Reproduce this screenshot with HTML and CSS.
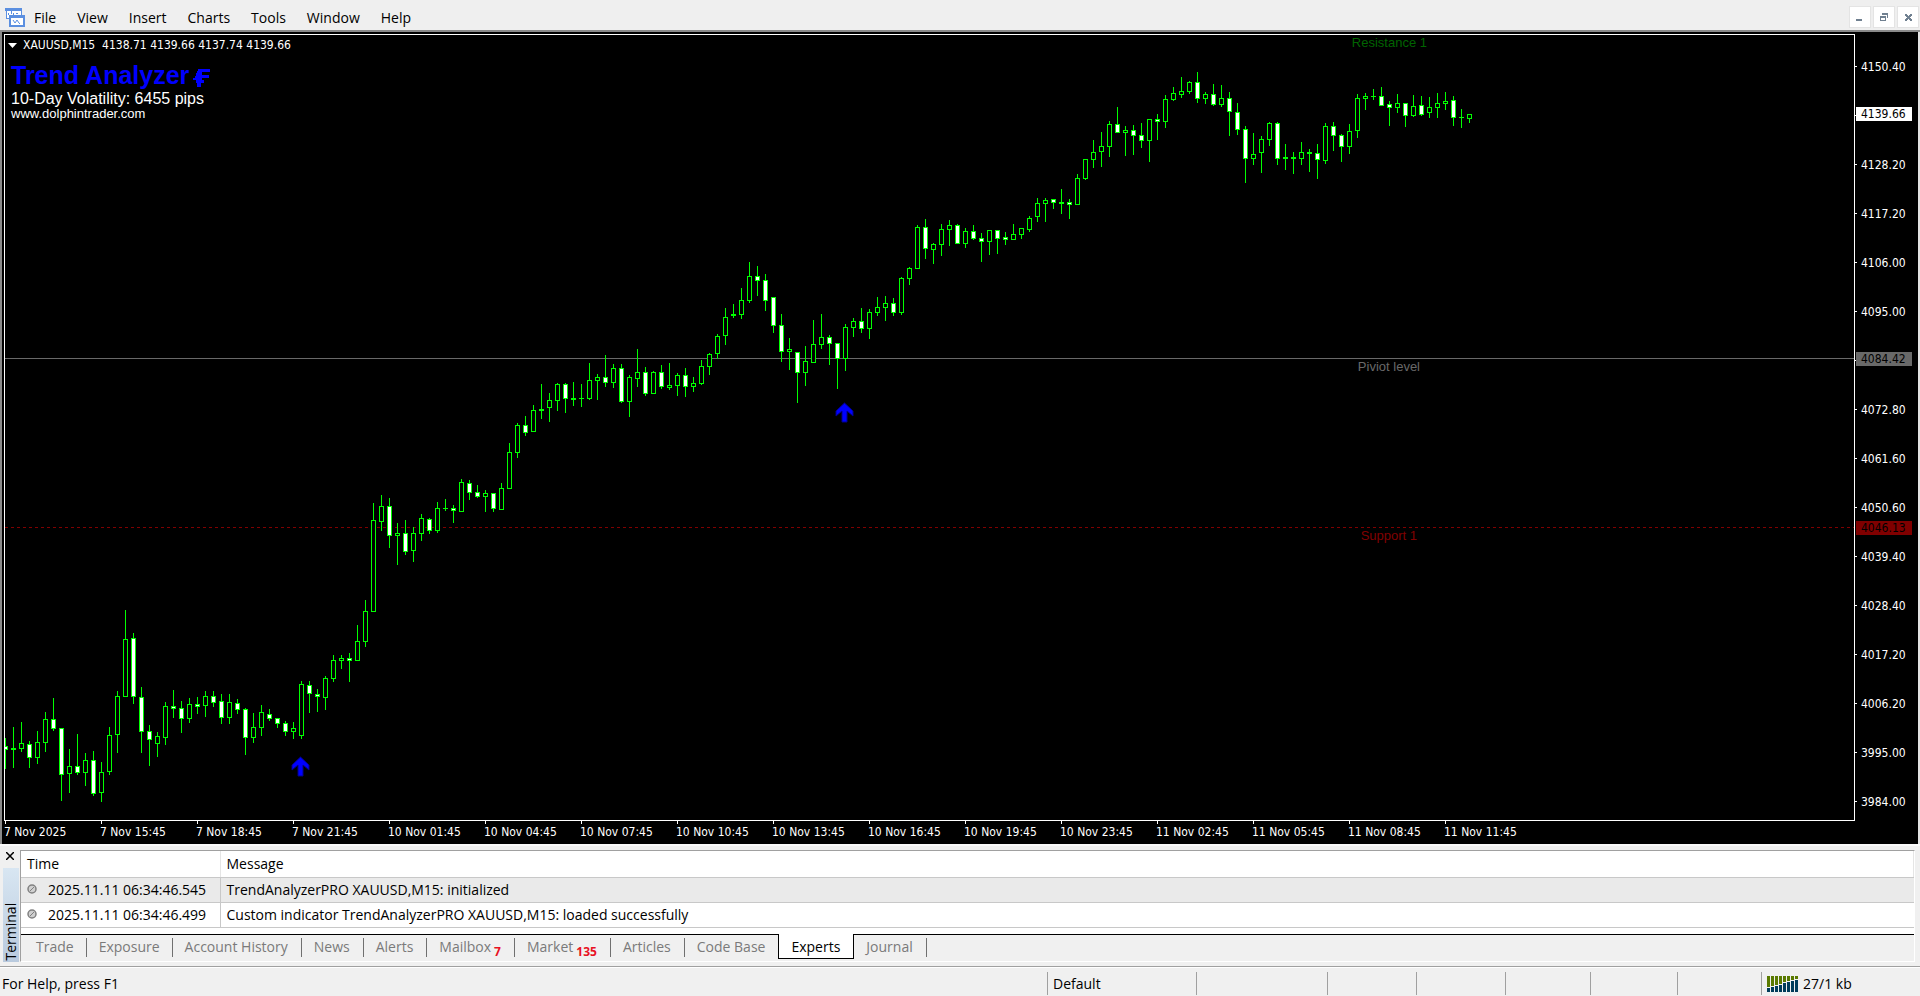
FILE: index.html
```html
<!DOCTYPE html>
<html lang="en">
<head>
<meta charset="utf-8">
<title>XAUUSD,M15</title>
<link rel="stylesheet" href="styles.css">
</head>
<body>
<header class="menubar">
  <svg class="logo" width="20" height="20" viewBox="0 0 20 20" fill="none" stroke="#5b8fe0" shape-rendering="crispEdges">
    <rect x="1" y="1" width="15" height="10" fill="#fff" stroke-width="1"/>
    <path d="M0 1.5H17M0 2.5H17" stroke-width="2"/>
    <path d="M3 8V6M6 7V4M8 8V6M11 6h2" stroke-width="1"/>
    <rect x="5" y="9" width="14" height="10" fill="#fff" stroke-width="2"/>
    <path d="M4 9.5H20" stroke-width="3"/>
    <path d="M8 13l2 3 2-3 2 3 1 1" stroke-width="1" shape-rendering="auto"/>
  </svg>
  <nav class="menu">
    <button>File</button><button>View</button><button>Insert</button><button>Charts</button><button>Tools</button><button>Window</button><button>Help</button>
  </nav>
  <div class="winbtns">
    <button aria-label="Minimize"><svg width="20" height="20" fill="#708090" shape-rendering="crispEdges"><path d="M6 12h6v2H6z"/></svg></button>
    <button aria-label="Restore"><svg width="20" height="20" fill="#708090" fill-rule="evenodd" shape-rendering="crispEdges"><path d="M8 6h6v5h-1V8H8zM6 9h6v5H6zM7 11v2h4v-2z"/></svg></button>
    <button aria-label="Close"><svg width="20" height="20" fill="#708090" shape-rendering="crispEdges"><path d="M7 7h2v1h1v1h1V8h1V7h2v2h-1v1h-1v1h1v1h1v2h-2v-1h-1v-1h-1v1H9v1H7v-2h1v-1h1v-1H8V9H7z"/></svg></button>
  </div>
</header>

<main class="chart">
  <section class="plot" aria-label="XAUUSD M15 chart">
    <svg class="canvas" shape-rendering="crispEdges">
      <rect x="0" y="323" width="100%" height="1" fill="#696969"/>
      <line x1="0" y1="492.5" x2="100%" y2="492.5" stroke="#800000" stroke-dasharray="3 3"/>
      <path id="candles" fill="#00ff00"/>
      <path id="hollow" fill="#000"/>
      <path id="solid" fill="#fff"/>
      <g fill="#0000ff" stroke="#00008b" stroke-width="1" shape-rendering="auto">
        <path d="M295.500 722l8.500 8v5l-6-5v11h-5v-11l-6 5v-5z"/>
        <path d="M839.500 368l8.500 8v5l-6-5v11h-5v-11l-6 5v-5z"/>
      </g>
    </svg>
    <div class="info">
      <p class="quote"><svg width="10" height="5" fill="#fff"><path d="M0 0h9L4.500 5z"/></svg><span>XAUUSD,M15&nbsp; 4138.71 4139.66 4137.74 4139.66</span></p>
      <h1 class="title"><span>Trend Analyzer</span><svg width="17" height="18" fill="#00f" shape-rendering="crispEdges"><path d="M5 0h12v3H9v3h7v3H9v2h2v3H8v4H4v-4H3v-3H0V9h2V7h1V4h1V2h1z"/></svg></h1>
      <p class="vol">10-Day Volatility: 6455 pips</p>
      <p class="site">www.dolphintrader.com</p>
    </div>
    <span class="level resistance">Resistance 1</span>
    <span class="level pivot">Piviot level</span>
    <span class="level support">Support 1</span>
  </section>
  <div class="prices">
    <span>4150.40</span><span class="off"></span><span>4128.20</span><span>4117.20</span><span>4106.00</span><span>4095.00</span><span class="off"></span><span>4072.80</span><span>4061.60</span><span>4050.60</span><span>4039.40</span><span>4028.40</span><span>4017.20</span><span>4006.20</span><span>3995.00</span><span>3984.00</span>
    <b class="tag now">4139.66</b><b class="tag mid">4084.42</b><b class="tag low">4046.13</b>
  </div>
  <div class="times">
    <span>7 Nov 2025</span><span>7 Nov 15:45</span><span>7 Nov 18:45</span><span>7 Nov 21:45</span><span>10 Nov 01:45</span><span>10 Nov 04:45</span><span>10 Nov 07:45</span><span>10 Nov 10:45</span><span>10 Nov 13:45</span><span>10 Nov 16:45</span><span>10 Nov 19:45</span><span>10 Nov 23:45</span><span>11 Nov 02:45</span><span>11 Nov 05:45</span><span>11 Nov 08:45</span><span>11 Nov 11:45</span>
  </div>
</main>

<section class="terminal">
  <div class="side">
    <button class="close" aria-label="Close terminal"><svg width="8" height="8" stroke="#000" stroke-width="1.500"><path d="M0 0l8 8M8 0L0 8"/></svg></button>
    <div class="grip"><span>Terminal</span></div>
  </div>
  <div class="panel">
    <table class="log">
      <thead><tr><th class="time">Time</th><th>Message</th></tr></thead>
      <tbody>
        <tr class="alt"><td><svg class="dot" width="10" height="10"><circle cx="5" cy="5" r="4" fill="#d0d0d0" stroke="#808080" stroke-width="1.500"/><path d="M3 7l4-4" stroke="#808080"/></svg>2025.11.11 06:34:46.545</td><td>TrendAnalyzerPRO XAUUSD,M15: initialized</td></tr>
        <tr><td><svg class="dot" width="10" height="10"><circle cx="5" cy="5" r="4" fill="#d0d0d0" stroke="#808080" stroke-width="1.500"/><path d="M3 7l4-4" stroke="#808080"/></svg>2025.11.11 06:34:46.499</td><td>Custom indicator TrendAnalyzerPRO XAUUSD,M15: loaded successfully</td></tr>
      </tbody>
    </table>
    <nav class="tabs">
      <button>Trade</button><button>Exposure</button><button>Account History</button><button>News</button><button>Alerts</button><button>Mailbox<b>7</b></button><button>Market<b>135</b></button><button>Articles</button><button class="last">Code Base</button><button class="active">Experts</button><button>Journal</button>
    </nav>
  </div>
</section>

<footer class="status">
  <span>For Help, press F1</span><span>Default</span><span></span><span></span><span></span><span></span><span></span><span></span>
  <span class="net"><svg width="32" height="16" shape-rendering="crispEdges">
    <path fill="#5a7a00" d="M0 0h3v11H0zM4 0h3v10H4zM8 0h3v9H8zM12 0h3v8h-3zM16 0h3v6h-3zM20 0h3v5h-3zM24 0h3v4h-3zM28 0h3v3h-3z"/>
    <path fill="#003c5a" d="M0 12h3v4H0zM4 11h3v5H4zM8 10h3v6H8zM12 9h3v7h-3zM16 7h3v9h-3zM20 6h3v10h-3zM24 5h3v11h-3zM28 4h3v12h-3z"/>
  </svg>27/1 kb</span>
</footer>
<script src="chart.js"></script>
</body>
</html>
```
FILE: styles.css
```css
* { box-sizing: border-box; }
body {
  margin: 0;
  min-height: 100vh;
  display: flex;
  flex-direction: column;
  background: #f0f0f0;
  color: #000;
  font: 14px/20px "Open Sans", "Noto Sans", sans-serif;
}
button {
  font: inherit;
  color: inherit;
  background: none;
  border: 0;
  padding: 0;
}
p, h1 { margin: 0; }
svg { display: block; flex: none; }

.menubar {
  display: flex;
  align-items: center;
  height: 32px;
  padding: 5px 1px 1px 5px;
  background: #efefef;
  border-bottom: 2px solid #8a8a8a;
}
.menu {
  display: flex;
  gap: 21px;
  margin-left: 9px;
  padding-top: 2px;
}
.winbtns {
  display: flex;
  gap: 2px;
  margin-left: auto;
}
.winbtns button {
  width: 22px;
  height: 22px;
  background: #fff;
  border: 1px solid #e4e4e4;
}

.chart {
  flex: 1;
  display: grid;
  grid-template-columns: 1fr 63px;
  grid-template-rows: 1fr 23px;
  padding: 2px 0 0 2px;
  background: #000;
  border-left: 2px solid #8a8a8a;
  border-right: 2px solid #e3e3e3;
  color: #fff;
  font: 12px/14px "DejaVu Sans Condensed", "Noto Sans", sans-serif;
}
.plot {
  position: relative;
  border: 1px solid #fff;
  overflow: hidden;
}
.canvas {
  position: absolute;
  inset: 0;
  width: 100%;
  height: 100%;
}
.info {
  position: relative;
  padding: 3px 0 0 6px;
  font-family: "Liberation Sans", Arial, sans-serif;
}
.quote {
  display: flex;
  align-items: center;
  gap: 5px;
  margin-left: -3px;
  font: 12px/14px "DejaVu Sans Condensed", "Noto Sans", sans-serif;
}
.title {
  display: flex;
  align-items: center;
  gap: 4px;
  margin-top: 9px;
  color: #0000ff;
  font-size: 25px;
  line-height: 28px;
}
.title svg { margin-top: 5px; }
.vol {
  margin-top: 1px;
  font-size: 16px;
  line-height: 18px;
}
.site { font-size: 13px; line-height: 12px; }
.level {
  position: absolute;
  font: 13px/14px "Liberation Sans", Arial, sans-serif;
}
.resistance { right: 427px; top: 1px; color: #006400; }
.pivot { right: 434px; top: 325px; color: #696969; }
.support { right: 437px; top: 494px; color: #800000; }

.prices {
  position: relative;
  grid-row: 1 / 3;
  grid-column: 2;
  display: flex;
  flex-direction: column;
  padding-top: 8px;
}
.prices span {
  display: flex;
  align-items: center;
  gap: 4px;
  height: 49px;
}
.prices span::before {
  content: "";
  width: 2px;
  height: 1px;
  background: #fff;
}
.tag {
  position: absolute;
  left: 1px;
  width: 56px;
  padding-left: 5px;
  font-weight: normal;
  color: #000;
}
.now { top: 73px; background: #fff; }
.mid { top: 318px; background: #696969; }
.low { top: 487px; background: #800000; }
.times { display: flex; }
.times span {
  position: relative;
  flex: none;
  width: 96px;
  padding-top: 4px;
}
.times span::before {
  content: "";
  position: absolute;
  left: 1px;
  top: 0;
  width: 1px;
  height: 3px;
  background: #fff;
}

.terminal {
  display: flex;
  gap: 1px;
  padding: 4px 5px 4px 3px;
  border-top: 2px solid #fafafa;
  border-bottom: 1px solid #a0a0a0;
}
.side {
  display: flex;
  flex-direction: column;
  width: 16px;
}
.close {
  height: 18px;
  padding: 0 0 6px 3px;
}
.grip {
  flex: 1;
  display: flex;
  background: linear-gradient(#d8e6f2, #b9cade);
}
.grip span {
  writing-mode: vertical-rl;
  transform: rotate(180deg);
  width: 16px;
  padding-top: 2px;
  line-height: 16px;
}
.panel {
  flex: 1;
  background: #fff;
  border: 1px solid #a0a0a0;
  border-right-color: #fff;
  border-bottom-color: #fff;
}
.log {
  width: 100%;
  border-collapse: collapse;
  table-layout: fixed;
  margin-bottom: 6px;
}
.log th {
  height: 27px;
  padding: 1px 6px 0;
  text-align: left;
  font-weight: normal;
  border-right: 1px solid #e5e5e5;
  border-bottom: 1px solid #c8c8c8;
}
.log .time { width: 199px; }
.log td {
  height: 25px;
  padding: 0 6px;
  border-bottom: 1px solid #c8c8c8;
}
.log td:first-child { border-right: 1px solid #c8c8c8; }
.alt { background: #eaeaea; }
.dot {
  display: inline-block;
  margin-right: 11px;
  vertical-align: 1px;
}
.tabs {
  display: flex;
  align-items: flex-start;
  height: 27px;
  padding-left: 3px;
  background: #f0f0f0;
  border-top: 1px solid #000;
  color: #7a7a7a;
}
.tabs button {
  height: 19px;
  margin-top: 3px;
  padding: 0 12px 2px;
  line-height: 18px;
  border-right: 1px solid #707070;
}
.tabs button:nth-child(n+3) { padding-right: 13px; }
.tabs b {
  margin-left: 3px;
  color: #e81123;
  font-size: 12px;
  vertical-align: -4px;
  line-height: 12px;
}
.tabs .last { border-right: 0; }
.tabs .active {
  height: 25px;
  margin-top: -1px;
  padding-top: 2px;
  padding-bottom: 0;
  background: #fff;
  border: 1px solid #000;
  border-top: 0;
  color: #000;
}

.status {
  display: grid;
  grid-template-columns: 1fr 149px 131px 89px 89px 85px 87px 84px 159px;
  height: 29px;
  padding: 4px 0 1px;
  border-top: 1px solid #fff;
}
.status span {
  display: flex;
  align-items: center;
  padding-left: 5px;
  border-left: 1px solid #a0a0a0;
}
.status span:first-child {
  padding-left: 2px;
  border-left: 0;
}
.status .net { gap: 4px; }
```
FILE: chart.js
```javascript
// Each bar: wick top, body top, body bottom, wick bottom; w marks a falling bar.
const bars = `738,746,750,769,w 727,748,750,768 722,743,749,752 741,744,758,768,w 731,742,758,764 712,719,743,752 698,719,729,731,w 728,728,775,801,w
749,766,774,793 734,766,773,775,w 753,760,773,786 751,760,794,796,w 762,772,793,802 727,735,772,775 691,696,735,753 610,639,697,697
633,638,697,704,w 687,697,732,753,w 725,731,740,766,w 732,736,744,757 702,706,738,745 690,706,709,718,w 701,708,719,733,w 698,704,719,723
697,704,707,714,w 691,696,706,717 691,696,703,707,w 694,701,718,724,w 694,702,718,724 699,703,710,714,w 708,709,738,755,w 713,727,738,743
705,712,728,736 709,714,719,721,w 718,718,724,728,w 721,723,732,736,w 722,728,732,739 681,684,736,739 681,685,694,713,w 689,694,697,712,w
676,678,698,710 655,660,679,682 655,658,661,669 653,658,661,682,w 625,641,661,661 600,611,642,647 503,520,612,612 495,506,522,531
498,506,536,548,w 523,533,536,565 520,533,552,555,w 527,533,551,562 514,518,534,541 518,519,531,534,w 502,508,531,533 499,508,509,511
505,508,511,523,w 479,482,512,512 480,483,493,500,w 485,492,497,498,w 490,493,497,512 493,493,509,512,w 483,488,510,510 443,452,489,489
423,425,453,458 416,425,433,436,w 405,410,432,432 384,409,411,419 393,400,408,422 383,384,401,411 383,384,399,413,w 382,398,400,406
384,398,399,407 363,380,399,400 374,377,381,400 355,377,383,387,w 364,368,383,388 364,368,402,403,w 375,377,402,417 349,372,379,387
367,372,394,396,w 371,372,394,394 365,372,387,389,w 363,385,388,390 373,375,386,396 368,375,387,397,w 377,383,387,392 360,366,384,385
353,354,367,375 334,336,354,359 308,317,336,345 304,314,316,318 288,300,315,319 262,276,301,303 266,276,281,296,w 274,280,301,311,w
297,297,326,333,w 314,325,352,362,w 338,349,352,370 352,352,373,403,w 346,361,373,386 320,344,363,363 314,337,345,349 335,337,344,365,w
343,343,359,389,w 324,327,359,371 318,321,328,337 308,321,329,333,w 309,312,329,339 297,307,313,316 296,303,308,321 298,303,313,316,w
277,278,313,315 267,268,279,285 225,227,269,269 219,227,249,259,w 243,244,250,264 224,229,245,256 220,225,230,246 224,225,244,244,w
228,231,244,248 225,231,239,240,w 233,238,242,262,w 230,230,242,255 230,230,239,254,w 232,237,240,245,w 224,234,240,240 228,228,235,239
216,218,230,232 198,203,217,222 198,200,204,222 199,199,203,209,w 189,202,204,214 199,202,205,219,w 174,178,205,205 159,159,179,180
140,152,160,168 132,146,152,167 121,124,147,157 107,124,133,133,w 126,130,133,156 125,130,136,155,w 123,135,141,148,w 119,119,141,162
114,119,122,140,w 95,99,122,128 87,93,100,101 77,91,95,98 81,82,92,94 72,82,99,103,w 92,94,99,104 84,94,105,106,w
85,98,105,107 92,98,112,136,w 103,112,130,135,w 126,129,159,183,w 133,154,159,165 136,139,153,173 122,123,140,146 122,123,159,165,w
144,157,159,170 152,157,159,174 142,152,159,165 149,152,154,172 144,153,160,179,w 123,126,161,164 122,126,136,151,w 134,135,147,162,w
124,131,147,154 94,98,131,138 93,96,99,110 89,96,97,100 87,96,106,106,w 101,104,108,126,w 94,103,108,113 103,103,116,127,w
95,106,116,117 96,105,115,116,w 97,107,113,118 93,103,108,118 92,101,104,110 96,100,118,126,w 109,117,118,128 114,114,119,123`;

const STEP = 8;
const ORIGIN = 35;
const box = (x, top, width, bottom) => `M${x} ${top - ORIGIN}h${width}V${bottom - ORIGIN}h${-width}z`;

let outline = "";
let hollow = "";
let solid = "";
bars.split(/\s+/).forEach((bar, i) => {
  const [high, top, bottom, low, falling] = bar.split(",");
  const x = i * STEP;
  if (+high < +top) outline += box(x, high, 1, top);
  if (+low > +bottom) outline += box(x, bottom, 1, low);
  outline += box(x - 2, top, 5, bottom);
  if (bottom - top > 2) {
    const inner = box(x - 1, +top + 1, 3, bottom - 1);
    if (falling) solid += inner;
    else hollow += inner;
  }
});
document.getElementById("candles").setAttribute("d", outline);
document.getElementById("hollow").setAttribute("d", hollow);
document.getElementById("solid").setAttribute("d", solid);
```
